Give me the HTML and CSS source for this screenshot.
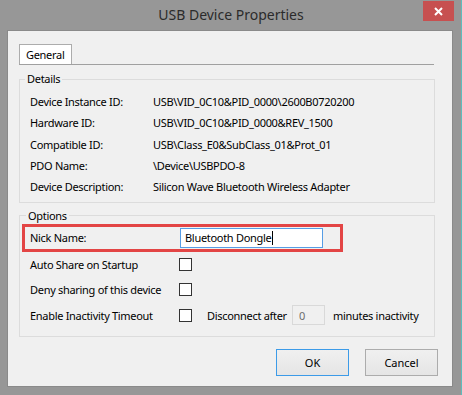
FILE: index.html
```html
<!DOCTYPE html>
<html lang="en">
<head>
    <meta charset="UTF-8">
    <title>USB Device Properties</title>
    <link rel="stylesheet" href="styles.css">
</head>
<body>
    <div class="window">
        <div class="titlebar">
            <span class="title">USB Device Properties</span>
            <button class="close" type="button" aria-label="Close">
                <svg width="9" height="9" viewBox="0 0 9 9">
                    <path d="M1 1 L8 8 M8 1 L1 8" stroke="#fff" stroke-width="2"/>
                </svg>
            </button>
        </div>
        <div class="client">
            <div class="tabs">
                <div class="tab active">General</div>
            </div>
            <div class="tab-panel">
                <fieldset class="group details">
                    <legend>Details</legend>
                    <dl class="props">
                        <dt>Device Instance ID:</dt>
                        <dd>USB\VID_0C10&amp;PID_0000\2600B0720200</dd>
                        <dt>Hardware ID:</dt>
                        <dd>USB\VID_0C10&amp;PID_0000&amp;REV_1500</dd>
                        <dt>Compatible ID:</dt>
                        <dd>USB\Class_E0&amp;SubClass_01&amp;Prot_01</dd>
                        <dt>PDO Name:</dt>
                        <dd>\Device\USBPDO-8</dd>
                        <dt>Device Description:</dt>
                        <dd>Silicon Wave Bluetooth Wireless Adapter</dd>
                    </dl>
                </fieldset>
                <fieldset class="group options">
                    <legend>Options</legend>
                    <div class="nick-row">
                        <span>Nick Name:</span>
                        <div class="textbox">Bluetooth Dongle<span class="caret"></span></div>
                    </div>
                    <div class="check-row">
                        <label class="check-label" for="auto-share">Auto Share on Startup</label>
                        <input type="checkbox" id="auto-share">
                    </div>
                    <div class="check-row">
                        <label class="check-label" for="deny-share">Deny sharing of this device</label>
                        <input type="checkbox" id="deny-share">
                    </div>
                    <div class="check-row timeout-row">
                        <label class="check-label" for="inactivity">Enable Inactivity Timeout</label>
                        <input type="checkbox" id="inactivity">
                        <span class="after-label">Disconnect after</span>
                        <input type="text" class="minutes" value="0" disabled>
                        <span class="minutes-label">minutes inactivity</span>
                    </div>
                </fieldset>
            </div>
            <div class="buttons">
                <button type="button" class="btn default">OK</button>
                <button type="button" class="btn">Cancel</button>
            </div>
        </div>
    </div>
</body>
</html>
```

FILE: styles.css
```css
/* Ventana general */
body {
    margin: 0;
    font-family: 'Noto Sans', 'DejaVu Sans', sans-serif;
    font-size: 11px;
    letter-spacing: -0.3px;
    color: #000;
}

.window {
    width: 462px;
    height: 395px;
    background: #979797;
    box-shadow: inset -1px 0 #5dbdbd;
}

/* Barra de titulo */
.titlebar {
    height: 30px;
    padding: 0 8px;
    display: grid;
    grid-template-columns: 1fr auto 1fr;
}

.title {
    grid-column: 2;
    font-size: 14px;
    letter-spacing: 0;
    line-height: 30px;
    color: #2b2b2b;
}

.close {
    grid-column: 3;
    justify-self: end;
    align-self: start;
    margin-top: 1px;
    width: 31px;
    height: 20px;
    padding: 0;
    border: none;
    background: #c75050;
    display: flex;
    align-items: center;
    justify-content: center;
}

/* Area cliente */
.client {
    margin-left: 7px;
    width: 446px;
    height: 357px;
    box-sizing: border-box;
    border: 1px solid #8a8a8a;
    background: #f0f0f0;
    display: flex;
    flex-direction: column;
}

.tabs {
    display: flex;
    margin: 13px 0 0 11px;
}

.tab {
    width: 53px;
    height: 20px;
    box-sizing: border-box;
    padding-left: 6px;
    border: 1px solid #acacac;
    border-bottom: none;
    background: #fff;
    line-height: 19px;
}

.tab-panel {
    margin: 0 18px 0 11px;
    border-top: 1px solid #a0a0a0;
}

/* Grupos */
.group {
    margin: 0 -1px 0 0;
    padding: 0;
    border: 1px solid #dcdcdc;
    min-width: 0;
}

.group legend {
    margin-left: 5px;
    padding: 0 2px;
    line-height: 16px;
}

.options legend {
    margin-left: 6px;
}

.details {
    margin-top: 6px;
}

.options {
    margin-top: 5px;
    padding-bottom: 7px;
}

.props {
    margin: 0;
    padding: 4px 0 4px 10px;
    display: grid;
    grid-template-columns: 123px 1fr;
    grid-auto-rows: 21.33px;
    align-items: center;
}

.props dd {
    margin: 0;
}

/* Opciones */
.nick-row {
    margin-left: 2px;
    width: 321px;
    height: 28px;
    box-sizing: border-box;
    border: 3px solid #e34545;
    padding-left: 5px;
    display: grid;
    grid-template-columns: 150px 143px;
    align-items: center;
}

.textbox {
    height: 20px;
    box-sizing: border-box;
    border: 1px solid #569de5;
    background: #fff;
    padding-left: 4px;
    line-height: 18px;
    display: flex;
    align-items: center;
}

.caret {
    width: 1px;
    height: 14px;
    margin-left: 1px;
    background: #000;
}

.check-row {
    height: 25px;
    padding-left: 10px;
    display: flex;
    align-items: center;
}

.check-row:first-of-type {
    margin-top: 3px;
}

.timeout-row {
    height: 27px;
}

.check-label {
    width: 149px;
}

.check-row input[type="checkbox"] {
    appearance: none;
    margin: 0;
    width: 13px;
    height: 13px;
    border: 1px solid #333;
    background: #fff;
}

.after-label {
    margin-left: 15px;
    width: 85px;
}

.minutes {
    width: 33px;
    height: 20px;
    box-sizing: border-box;
    margin: 0;
    padding: 0 0 0 6px;
    border: 1px solid #d9d9d9;
    background: #f0f0f0;
    color: #6d6d6d;
    font: inherit;
}

.minutes-label {
    margin-left: 8px;
}

/* Botones */
.buttons {
    margin: 12px 14px 0 0;
    display: flex;
    justify-content: flex-end;
    gap: 16px;
}

.btn {
    width: 73px;
    height: 27px;
    padding: 0;
    border: 1px solid #acacac;
    background: linear-gradient(#f0f0f0, #e5e5e5);
    font: inherit;
    color: #000;
}

.btn.default {
    border-color: #3c9be8;
}
```
